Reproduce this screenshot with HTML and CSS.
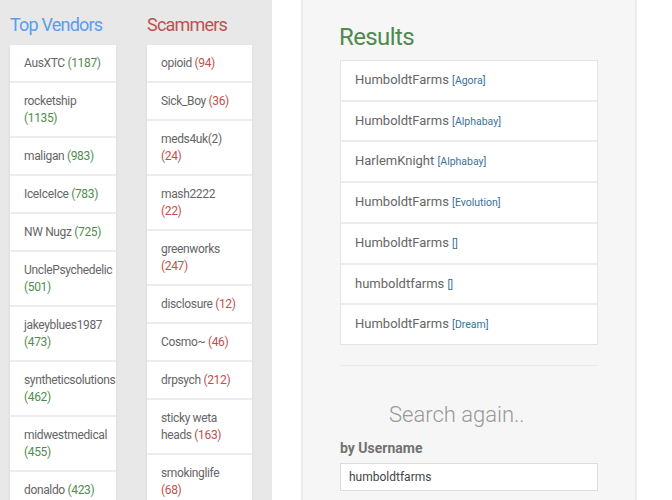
FILE: index.html
```html
<!DOCTYPE html>
<html>
<head>
<meta charset="utf-8">
<link rel="stylesheet" href="styles.css">
</head>
<body>
<div class="page">
  <aside class="sidebar">
    <section class="col col-vendors">
      <h3 class="col-title title-blue">Top Vendors</h3>
      <ul class="card">
        <li class="item">AusXTC <span class="ok">(1187)</span></li>
        <li class="item">rocketship <span class="ok">(1135)</span></li>
        <li class="item">maligan <span class="ok">(983)</span></li>
        <li class="item">IceIceIce <span class="ok">(783)</span></li>
        <li class="item">NW Nugz <span class="ok">(725)</span></li>
        <li class="item">UnclePsychedelic <span class="ok">(501)</span></li>
        <li class="item">jakeyblues1987 <span class="ok">(473)</span></li>
        <li class="item">syntheticsolutions <span class="ok">(462)</span></li>
        <li class="item">midwestmedical <span class="ok">(455)</span></li>
        <li class="item">donaldo <span class="ok">(423)</span></li>
      </ul>
    </section>
    <section class="col col-scam">
      <h3 class="col-title title-red">Scammers</h3>
      <ul class="card">
        <li class="item">opioid <span class="bad">(94)</span></li>
        <li class="item">Sick_Boy <span class="bad">(36)</span></li>
        <li class="item">meds4uk(2) <span class="bad">(24)</span></li>
        <li class="item">mash2222 <span class="bad">(22)</span></li>
        <li class="item">greenworks <span class="bad">(247)</span></li>
        <li class="item">disclosure <span class="bad">(12)</span></li>
        <li class="item">Cosmo~ <span class="bad">(46)</span></li>
        <li class="item">drpsych <span class="bad">(212)</span></li>
        <li class="item">sticky weta heads <span class="bad">(163)</span></li>
        <li class="item">smokinglife <span class="bad">(68)</span></li>
      </ul>
    </section>
  </aside>
  <div class="spacer"></div>
  <main class="panel">
    <h2 class="results-title">Results</h2>
    <ul class="results">
      <li class="result">HumboldtFarms <span class="tag">[Agora]</span></li>
      <li class="result">HumboldtFarms <span class="tag">[Alphabay]</span></li>
      <li class="result">HarlemKnight <span class="tag">[Alphabay]</span></li>
      <li class="result">HumboldtFarms <span class="tag">[Evolution]</span></li>
      <li class="result">HumboldtFarms <span class="tag">[]</span></li>
      <li class="result">humboldtfarms <span class="tag">[]</span></li>
      <li class="result">HumboldtFarms <span class="tag">[Dream]</span></li>
    </ul>
    <hr class="divider">
    <h3 class="search-title">Search again..</h3>
    <label class="field-label">by Username</label>
    <div class="input">humboldtfarms</div>
  </main>
</div>
</body>
</html>
```

FILE: styles.css
```css
* { box-sizing: border-box; }
html, body {
  margin: 0;
  padding: 0;
  background: #ffffff;
  font-family: Roboto, "Liberation Sans", sans-serif;
  color: #666666;
  height: 100%;
  overflow: hidden;
}
.page {
  display: flex;
  height: 500px;
}
.sidebar {
  width: 272px;
  background: #e8e8e8;
  display: flex;
  padding-left: 10px;
  gap: 31px;
}
.col { display: flex; flex-direction: column; }
.col-vendors { width: 106px; }
.col-scam { width: 105px; }
.col-title {
  margin: 13px 0 9px 0;
  font-size: 18px;
  line-height: 23px;
  font-weight: 400;
  letter-spacing: -0.8px;
}
.title-blue { color: #5b9cef; }
.title-red { color: #b95350; }
.card {
  list-style: none;
  margin: 0;
  padding: 0;
  background: #ffffff;
  box-shadow: 0 1px 3px rgba(0,0,0,0.07);
}
.item {
  font-size: 12px;
  letter-spacing: -0.35px;
  line-height: 17px;
  padding: 9.5px 14px 9.5px 14px;
  border-bottom: 2px solid #ececec;
  color: #666;
}
.ok { color: #4f8d4f; }
.bad { color: #c0504d; }
.spacer { width: 29px; }
.panel {
  width: 336px;
  background: #f6f6f6;
  border-left: 2px solid #ececec;
  border-right: 2px solid #ececec;
  padding: 0 37px;
}
.results-title {
  margin: 24px 0 10px -1px;
  font-size: 24px;
  line-height: 26px;
  font-weight: 400;
  letter-spacing: -0.6px;
  color: #4e8a4e;
}
.results {
  list-style: none;
  margin: 0;
  padding: 0;
  background: #fff;
  border: 1px solid #e4e4e4;
}
.result {
  font-size: 13px;
  line-height: 18.7px;
  padding: 10px 14px;
  border-bottom: 2px solid #ececec;
  color: #666;
}
.result:last-child { border-bottom: none; }
.tag {
  font-size: 10.5px;
  line-height: 1;
  color: #3a7398;
}
.divider {
  border: 0;
  border-top: 1px solid #eaeaea;
  margin: 20px 0 0 0;
}
.search-title {
  margin: 36px 0 0 49px;
  font-size: 22px;
  line-height: 26px;
  font-weight: 300;
  color: #999999;
}
.field-label {
  display: block;
  margin-top: 12px;
  font-size: 14px;
  font-weight: 700;
  line-height: 17px;
  color: #727272;
}
.input {
  margin-top: 6px;
  height: 28px;
  background: #fff;
  border: 1px solid #dcdcdc;
  padding: 0 8px;
  font-size: 12px;
  line-height: 26px;
  color: #444;
}
```
